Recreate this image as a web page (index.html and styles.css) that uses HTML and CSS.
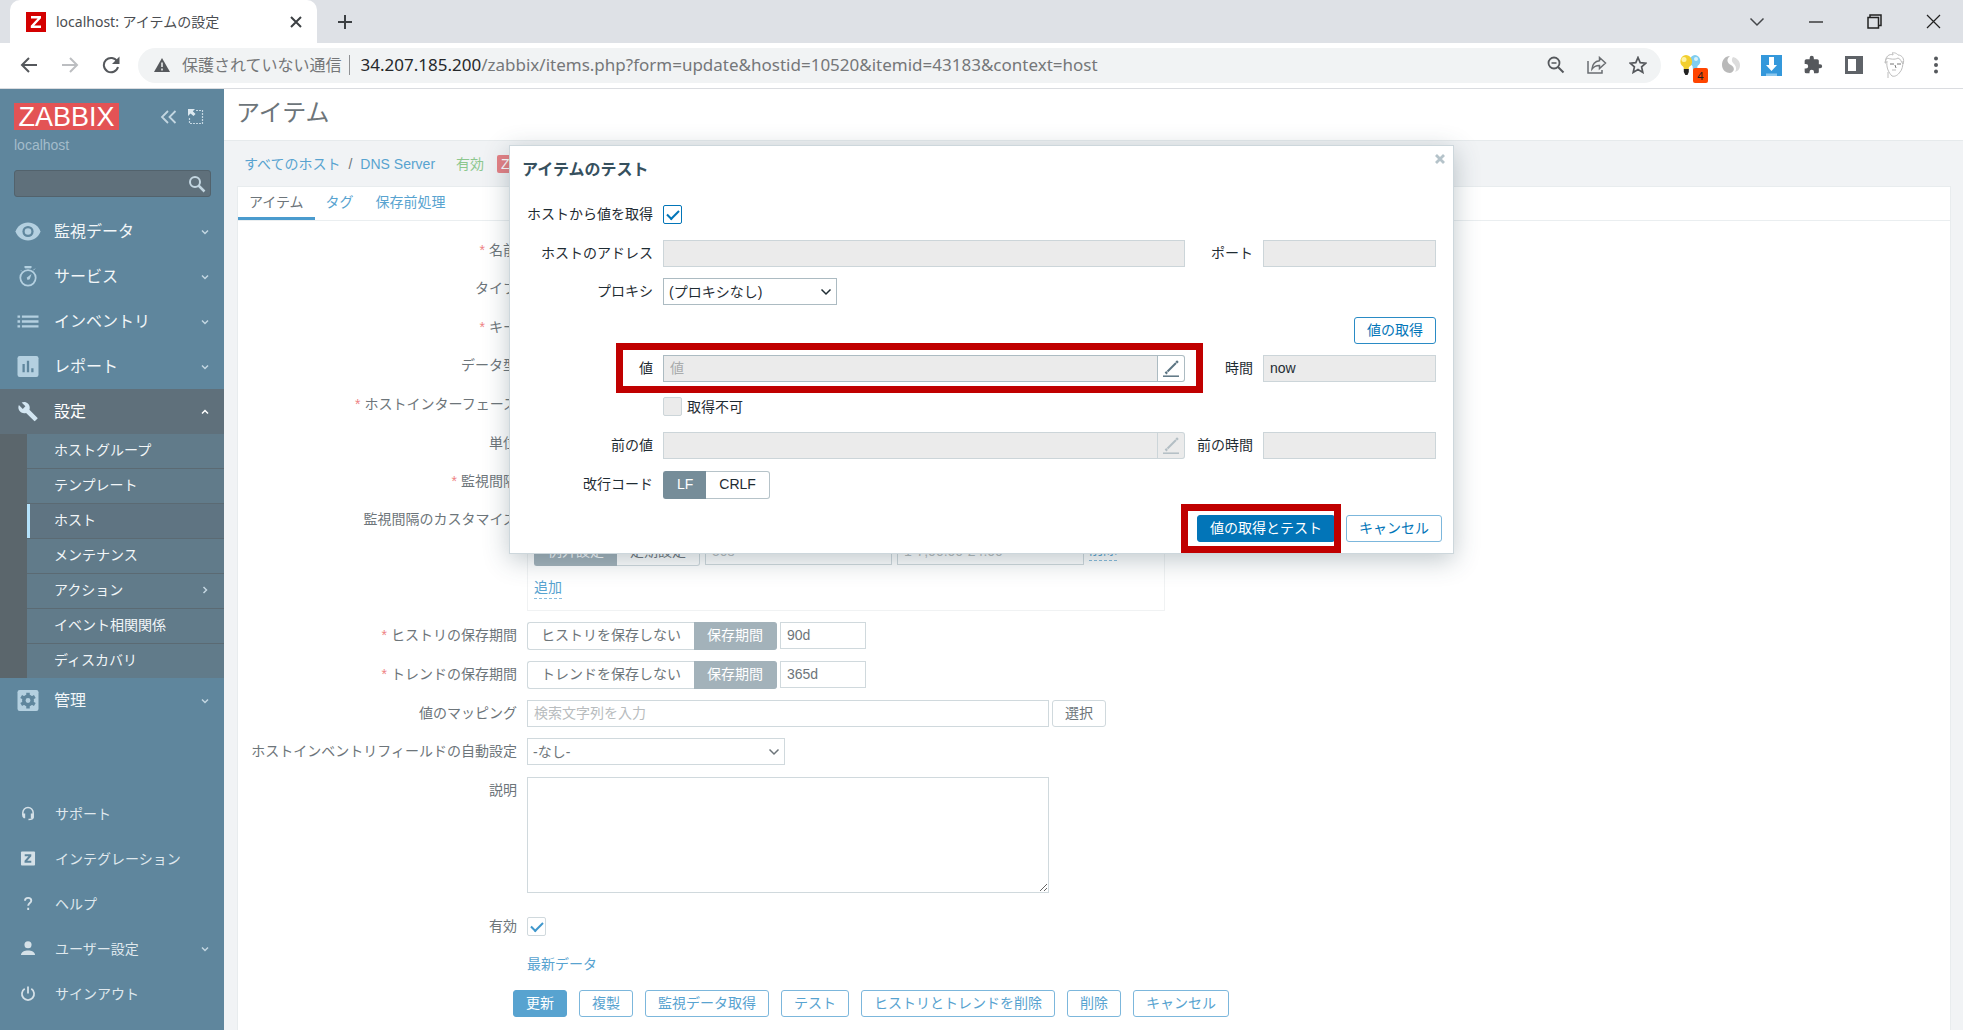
FILE: index.html
```html
<!DOCTYPE html>
<html lang="ja">
<head>
<meta charset="utf-8">
<title>localhost: アイテムの設定</title>
<link rel="stylesheet" href="styles.css">
</head>
<body>
<svg class="defs" aria-hidden="true">
  <symbol id="down" viewBox="0 0 8 8"><path d="M1 2.5l3 3 3-3" fill="none" stroke="currentColor" stroke-width="1.5"/></symbol>
  <symbol id="caret" viewBox="0 0 12 12"><path d="M1.5 3.5L6 8l4.500-4.500" fill="none" stroke="currentColor" stroke-width="1.500"/></symbol>
  <symbol id="pencil" viewBox="0 0 18 18"><path d="M5.500 11.500L14 3" stroke="currentColor" stroke-width="2"/><path d="M14.300 2.700l1.600-1.600M3.500 13.500l1.600-1.500" stroke="currentColor" stroke-width="2.400"/><path d="M1 16.200h16" stroke="currentColor" stroke-width="1.500"/></symbol>
</svg>

<header class="browser">
  <div class="tabstrip">
    <div class="tab">
      <svg class="favicon" width="20" height="20" viewBox="0 0 20 20"><rect width="20" height="20" fill="#d40000"/><path d="M5 4h10v2.200L8.200 13.600H15V16H4.800v-2.200L11.600 6.400H5z" fill="#fff"/></svg>
      <span class="tab-title">localhost: アイテムの設定</span>
      <button class="icon-btn tab-close" aria-label="タブを閉じる"><svg width="12" height="12" viewBox="0 0 12 12"><path d="M1 1l10 10M11 1L1 11" stroke="#3c4043" stroke-width="2"/></svg></button>
    </div>
    <button class="icon-btn tab-add" aria-label="新しいタブ"><svg width="16" height="16" viewBox="0 0 16 16"><path d="M8 1v14M1 8h14" stroke="#3c4043" stroke-width="2"/></svg></button>
    <div class="window-controls">
      <button class="icon-btn" aria-label="タブを検索"><svg width="16" height="10" viewBox="0 0 16 10"><path d="M1.500 1.500L8 8l6.500-6.500" fill="none" stroke="#44474a" stroke-width="1.500"/></svg></button>
      <button class="icon-btn" aria-label="最小化"><svg width="14" height="14" viewBox="0 0 14 14"><path d="M0 7h14" stroke="#222" stroke-width="1.300"/></svg></button>
      <button class="icon-btn" aria-label="元に戻す"><svg width="15" height="15" viewBox="0 0 15 15"><path d="M1 3.500h10.500V14H1zM3 3.500V1h11v10.500h-2.500" fill="none" stroke="#222" stroke-width="1.500"/></svg></button>
      <button class="icon-btn" aria-label="閉じる"><svg width="15" height="15" viewBox="0 0 15 15"><path d="M1 1l13 13M14 1L1 14" stroke="#222" stroke-width="1.200"/></svg></button>
    </div>
  </div>
  <div class="toolbar">
    <button class="icon-btn" aria-label="戻る"><svg width="18" height="18" viewBox="0 0 18 18"><path d="M17 9H2M9 2L2 9l7 7" fill="none" stroke="#55585c" stroke-width="2"/></svg></button>
    <button class="icon-btn" aria-label="進む"><svg width="18" height="18" viewBox="0 0 18 18"><path d="M1 9h15M9 2l7 7-7 7" fill="none" stroke="#bcbec1" stroke-width="2"/></svg></button>
    <button class="icon-btn" aria-label="再読み込み"><svg width="18" height="18" viewBox="0 0 18 18"><path d="M15.300 5.500A7.200 7.200 0 1 0 16 11" fill="none" stroke="#55585c" stroke-width="2"/><path d="M17.500.5v7.500H10z" fill="#55585c"/></svg></button>
    <div class="address">
      <svg width="16" height="14" viewBox="0 0 16 14"><path d="M8 0l8 14H0z" fill="#55585c"/><path d="M8 4.500v4.500M8 10.500v2" stroke="#f1f3f4" stroke-width="1.500"/></svg>
      <span class="insecure">保護されていない通信</span>
      <span class="divider"></span>
      <span class="url"><span class="host">34.207.185.200</span>/zabbix/items.php?form=update&amp;hostid=10520&amp;itemid=43183&amp;context=host</span>
      <button class="icon-btn" aria-label="ズーム"><svg width="18" height="18" viewBox="0 0 18 18"><circle cx="7" cy="7" r="5.500" fill="none" stroke="#55585c" stroke-width="1.800"/><path d="M11 11l5.500 5.500" stroke="#55585c" stroke-width="2"/><path d="M4.500 7h5" stroke="#55585c" stroke-width="1.500"/></svg></button>
      <button class="icon-btn" aria-label="共有"><svg width="20" height="18" viewBox="0 0 20 18"><path d="M1 5v12h14v-3" fill="none" stroke="#6a6d71" stroke-width="1.500"/><path d="M12.500 1.500L18.500 7l-6 5.500V9.500C9 9.300 7 10.500 5 13c.4-4.500 3-7.800 7.500-8.300z" fill="none" stroke="#6a6d71" stroke-width="1.500"/></svg></button>
      <button class="icon-btn" aria-label="ブックマーク"><svg width="18" height="18" viewBox="0 0 18 18"><path d="M9 1.500l2.200 5.200 5.600.5-4.200 3.700 1.200 5.500L9 13.500l-4.800 2.900 1.200-5.500L1.200 7.200l5.600-.5z" fill="none" stroke="#55585c" stroke-width="1.700"/></svg></button>
    </div>
    <button class="icon-btn ext" aria-label="拡張機能"><svg width="24" height="24" viewBox="0 0 24 24"><path d="M17 2a6 6 0 0 1 2.500 11l-.5 4h-4l-.5-4A6 6 0 0 1 17 2z" fill="#7fcdf0"/><circle cx="18" cy="6" r="2" fill="#d6f1fc"/><path d="M8 2a6.500 6.500 0 0 1 3 12l-.5 3H6l-.5-3A6.500 6.500 0 0 1 8 2z" fill="#f3cf2e"/><circle cx="6" cy="6.500" r="2.500" fill="#fdf3a4"/><path d="M5.800 16h5v3l-1.300 3H7.300l-1.500-3z" fill="#222"/></svg><span class="badge">4</span></button>
    <button class="icon-btn" aria-label="拡張機能"><svg width="20" height="20" viewBox="0 0 20 20"><path d="M9 1C4 1 1 5 1 10c0 5 4 8 8 8 5-1 5-6 1-8S5 4 9 1z" fill="#b9b9b9"/><path d="M12 2c4 1 7 4 7 8s-2 6-5 7c2-3 1-6-1-8s-3-4-1-7z" fill="#dcdcdc"/></svg></button>
    <button class="icon-btn" aria-label="ダウンロード"><svg width="21" height="21" viewBox="0 0 21 21"><rect width="21" height="21" fill="#3498db"/><path d="M8 2h5v8h3l-5.500 6L5 10h3z" fill="#fff"/><path d="M5 18.500h11V21H5z" fill="#8cc8ee"/></svg></button>
    <button class="icon-btn" aria-label="拡張機能"><svg width="20" height="20" viewBox="0 0 24 24"><path fill="#55585c" d="M20.500 11H19V7a2 2 0 0 0-2-2h-4V3.500a2.500 2.500 0 0 0-5 0V5H4a2 2 0 0 0-2 2v3.800h1.500a2.700 2.700 0 0 1 0 5.400H2V20a2 2 0 0 0 2 2h3.800v-1.500a2.700 2.700 0 0 1 5.400 0V22H17a2 2 0 0 0 2-2v-4h1.500a2.500 2.500 0 0 0 0-5z"/></svg></button>
    <button class="icon-btn" aria-label="サイドパネル"><svg width="18" height="18" viewBox="0 0 18 18"><path d="M0 0h18v18H0zM3 3v12h8V3z" fill="#5f6368" fill-rule="evenodd"/></svg></button>
    <button class="icon-btn" aria-label="プロフィール"><svg width="22" height="26" viewBox="0 0 22 26" fill="none" stroke="#bdbdbd"><path d="M3 9c-1 7 2 12 5 15 3 1 6-1 8-4 2-2 3-6 3-11"/><path d="M2 11C0 5 6 1 9 3c0-2-1-2-1-2 4-1 6 2 6 2 4 0 7 4 5 9-2-2-2-5-5-6-3 2-8 1-11 0-1 2-2 3-2 5zM4 20v6M8 18h4"/><path d="M6 12h4M13 12h4M11 13l1 3" stroke="#777"/></svg></button>
    <button class="icon-btn" aria-label="メニュー"><svg width="4" height="18" viewBox="0 0 4 18" fill="#55585c"><circle cx="2" cy="2.500" r="2"/><circle cx="2" cy="9" r="2"/><circle cx="2" cy="15.500" r="2"/></svg></button>
  </div>
</header>

<div class="app">
  <aside class="sidebar">
    <div class="brand">
      <a class="logo" href="#">ZABBIX</a>
      <button class="icon-btn collapse" aria-label="サイドバーを隠す"><svg width="17" height="14" viewBox="0 0 17 14"><path d="M8 1L2 7l6 6M15.500 1l-6 6 6 6" fill="none" stroke="#c3d6e1" stroke-width="1.800"/></svg></button>
      <button class="icon-btn kiosk" aria-label="コンパクト表示"><svg width="16" height="16" viewBox="0 0 16 16"><path d="M8 1.500h6.500v13h-13V8" fill="none" stroke="#c3d6e1" stroke-width="1.200" stroke-dasharray="2 1"/><path d="M0 0h7L4.800 2.200 7.500 5 5.500 7 2.500 4.500 0 7z" fill="#dce8ef"/></svg></button>
    </div>
    <div class="server">localhost</div>
    <div class="search">
      <input type="text" aria-label="検索">
      <svg width="18" height="18" viewBox="0 0 18 18"><circle cx="7" cy="7" r="5" fill="none" stroke="#c3d6e1" stroke-width="2"/><path d="M10.500 10.500l6 6" stroke="#c3d6e1" stroke-width="2.500"/></svg>
    </div>
    <nav class="menu">
      <a class="item" href="#"><svg class="ico" viewBox="0 0 26 18"><path d="M13 0C7 0 2.500 3.600.5 9c2 5.400 6.500 9 12.500 9s10.500-3.600 12.500-9C23.500 3.600 19 0 13 0z" fill="#b4d0e0"/><circle cx="13" cy="9" r="5.600" fill="#5f869d"/><circle cx="13" cy="9" r="3.300" fill="#b4d0e0"/></svg><span>監視データ</span><svg class="arrow"><use href="#down"/></svg></a>
      <a class="item" href="#"><svg class="ico" viewBox="0 0 24 24"><circle cx="12" cy="13.500" r="8.800" fill="none" stroke="#b4d0e0" stroke-width="2"/><path d="M8.500 0h7v2.200h-7zM18 5l2-2M5 6L4 5" stroke="#b4d0e0" fill="#b4d0e0"/><path d="M16 9l-2 6-2.500 1-1-2.500z" fill="#b4d0e0"/></svg><span>サービス</span><svg class="arrow"><use href="#down"/></svg></a>
      <a class="item" href="#"><svg class="ico" viewBox="0 0 24 24"><path d="M0 6.500h3M5 6.500h19M0 12h3M5 12h19M0 17.500h3M5 17.500h19" stroke="#b4d0e0" stroke-width="2.600"/></svg><span>インベントリ</span><svg class="arrow"><use href="#down"/></svg></a>
      <a class="item" href="#"><svg class="ico" viewBox="0 0 24 24"><rect width="24" height="24" rx="2.500" fill="#b4d0e0"/><path d="M7 9v9.500M12 5.500v13M17 14v4.500" stroke="#5f869d" stroke-width="2.600"/></svg><span>レポート</span><svg class="arrow"><use href="#down"/></svg></a>
      <a class="item open" href="#"><svg class="ico" viewBox="0 0 24 24"><path fill="#d3e6f2" d="M22.700 19l-9.100-9.100c.9-2.300.4-5-1.500-6.900-2-2-5-2.400-7.400-1.300L9 6 6 9 1.600 4.700C.4 7.100.9 10.100 2.900 12.100c1.900 1.900 4.600 2.400 6.900 1.500l9.100 9.100c.4.4 1 .4 1.400 0l2.300-2.300c.5-.4.5-1.100.1-1.400z"/></svg><span>設定</span><svg class="arrow up"><use href="#down"/></svg></a>
      <div class="submenu">
        <a href="#">ホストグループ</a>
        <a href="#">テンプレート</a>
        <a href="#" class="current">ホスト</a>
        <a href="#">メンテナンス</a>
        <a href="#">アクション<svg class="arrow right"><use href="#down"/></svg></a>
        <a href="#">イベント相関関係</a>
        <a href="#">ディスカバリ</a>
      </div>
      <a class="item" href="#"><svg class="ico" viewBox="0 0 24 24"><rect width="24" height="24" rx="2.500" fill="#b4d0e0"/><circle cx="12" cy="12" r="4.800" fill="none" stroke="#5f869d" stroke-width="4"/><path d="M12 3v4M12 17v4M4.200 7.500l3.500 2M16.300 14.500l3.500 2M4.200 16.500l3.500-2M16.300 9.500l3.500-2" stroke="#5f869d" stroke-width="4"/></svg><span>管理</span><svg class="arrow"><use href="#down"/></svg></a>
    </nav>
    <nav class="menu small">
      <a class="item" href="#"><svg class="ico" viewBox="0 0 16 16"><path d="M2.500 10V7a5.500 5.500 0 0 1 11 0v4.500c0 2-2 3-5 3" fill="none" stroke="#d5e1e8" stroke-width="1.600"/><path d="M2 8h3v5H3.500L2 11.500zM11 8h3v5h-3z" fill="#d5e1e8"/></svg><span>サポート</span></a>
      <a class="item" href="#"><svg class="ico" viewBox="0 0 16 16"><rect x=".5" y=".5" width="15" height="15" rx="1" fill="#d5e1e8"/><path d="M4.500 3.500h7v2l-4.300 5h4.300v2h-7.200v-2l4.300-5H4.500z" fill="#5f869d"/></svg><span>インテグレーション</span></a>
      <a class="item" href="#"><svg class="ico" viewBox="0 0 16 16"><path d="M4.800 5C4.800 1 11.500 1 11.500 5c0 2.600-3.300 2.500-3.300 5.500M8.200 12.500v2.500" fill="none" stroke="#d5e1e8" stroke-width="2"/></svg><span>ヘルプ</span></a>
      <a class="item" href="#"><svg class="ico" viewBox="0 0 16 16"><circle cx="8" cy="4" r="3.800" fill="#d5e1e8"/><path d="M.5 15c0-3.500 4-5 7.500-5s7.500 1.500 7.500 5z" fill="#d5e1e8"/></svg><span>ユーザー設定</span><svg class="arrow"><use href="#down"/></svg></a>
      <a class="item" href="#"><svg class="ico" viewBox="0 0 16 16"><path d="M4.500 3a6.500 6.500 0 1 0 7 0M8 .5v7.500" fill="none" stroke="#d5e1e8" stroke-width="1.900"/></svg><span>サインアウト</span></a>
    </nav>
  </aside>

  <main class="page">
    <div class="page-head"><h1>アイテム</h1></div>
    <div class="crumbs">
      <a href="#">すべてのホスト</a><span class="slash">/</span><a href="#">DNS Server</a><span class="enabled">有効</span><span class="zbx">ZBX</span>
    </div>
    <section class="panel">
      <div class="tabs">
        <a class="active" href="#">アイテム</a><a href="#">タグ</a><a href="#">保存前処理</a>
      </div>
      <form class="form">
        <label class="req" for="name">名前</label><div class="row"><input class="wide" id="name" type="text"></div>
        <label for="type">タイプ</label><div class="row tall"><span class="select"><select id="type"></select></span></div>
        <label class="req" for="key">キー</label><div class="row"><input class="wide" id="key" type="text"></div>
        <label for="vtype">データ型</label><div class="row tall"><span class="select"><select id="vtype"></select></span></div>
        <label class="req" for="iface">ホストインターフェース</label><div class="row tall"><span class="select"><select id="iface"></select></span></div>
        <label for="units">単位</label><div class="row"><input class="wide" id="units" type="text"></div>
        <label class="req" for="delay">監視間隔</label><div class="row"><input class="wide" id="delay" type="text"></div>
        <label for="flex">監視間隔のカスタマイズ</label>
        <div class="intervals">
          <div class="row tall">
            <div class="seg"><button type="button" class="on">例外設定</button><button type="button">定期設定</button></div>
            <input id="flex" type="text" placeholder="50s"><input type="text" placeholder="1-7,00:00-24:00" aria-label="期間"><a class="dotted" href="#">削除</a>
          </div>
          <div class="add-row"><a class="dotted" href="#">追加</a></div>
        </div>
        <label class="req" for="history">ヒストリの保存期間</label>
        <div class="row tall"><div class="seg"><button type="button">ヒストリを保存しない</button><button type="button" class="on">保存期間</button></div><input class="short" id="history" type="text" value="90d"></div>
        <label class="req" for="trends">トレンドの保存期間</label>
        <div class="row tall"><div class="seg"><button type="button">トレンドを保存しない</button><button type="button" class="on">保存期間</button></div><input class="short" id="trends" type="text" value="365d"></div>
        <label for="map">値のマッピング</label>
        <div class="row"><input class="wide" id="map" type="text" placeholder="検索文字列を入力"><button type="button" class="btn plain">選択</button></div>
        <label for="inv">ホストインベントリフィールドの自動設定</label>
        <div class="row tall"><span class="select mid"><select id="inv"><option>-なし-</option></select><svg><use href="#caret"/></svg></span></div>
        <label for="desc">説明</label><div><textarea id="desc"></textarea></div>
        <label class="enable" for="status">有効</label><div class="row enable"><input id="status" type="checkbox" checked></div>
        <div class="row tall latest"><a href="#">最新データ</a></div>
        <div class="actions">
          <button type="button" class="btn primary">更新</button><button type="button" class="btn">複製</button><button type="button" class="btn">監視データ取得</button><button type="button" class="btn">テスト</button><button type="button" class="btn">ヒストリとトレンドを削除</button><button type="button" class="btn">削除</button><button type="button" class="btn">キャンセル</button>
        </div>
      </form>
    </section>
  </main>
</div>

<div class="overlay">
  <section class="dialog" role="dialog" aria-labelledby="dlg-title">
    <div class="dialog-head">
      <h2 id="dlg-title">アイテムのテスト</h2>
      <button class="icon-btn close" aria-label="閉じる"><svg width="10" height="10" viewBox="0 0 10 10"><path d="M1 1l8 8M9 1L1 9" stroke="#b5c3ca" stroke-width="2.800"/></svg></button>
    </div>
    <form class="test-form">
      <label for="get">ホストから値を取得</label><div class="span"><input id="get" type="checkbox" checked></div>
      <label for="addr">ホストのアドレス</label><input id="addr" type="text" disabled><label for="port">ポート</label><input id="port" type="text" disabled>
      <label for="proxy">プロキシ</label><div class="span"><span class="select small-select"><select id="proxy"><option>(プロキシなし)</option></select><svg><use href="#caret"/></svg></span></div>
      <div class="fetch"><button type="button" class="btn">値の取得</button></div>
      <label for="val">値</label><div class="multi active"><input id="val" type="text" placeholder="値" disabled><button type="button" aria-label="値を編集"><svg width="18" height="18"><use href="#pencil"/></svg></button></div><label for="time">時間</label><input id="time" type="text" value="now" disabled>
      <div class="unsupported"><input id="unsup" type="checkbox" disabled><label for="unsup">取得不可</label></div>
      <label for="prev">前の値</label><div class="multi"><input id="prev" type="text" disabled><button type="button" disabled aria-label="前の値を編集"><svg width="18" height="18"><use href="#pencil"/></svg></button></div><label for="ptime">前の時間</label><input id="ptime" type="text" disabled>
      <label for="lf">改行コード</label><div class="span seg"><button type="button" class="on" id="lf">LF</button><button type="button">CRLF</button></div>
    </form>
    <div class="dialog-foot">
      <button type="button" class="btn primary">値の取得とテスト</button>
      <button type="button" class="btn">キャンセル</button>
    </div>
    <div class="mark mark-value"></div>
    <div class="mark mark-submit"></div>
  </section>
</div>
</body>
</html>
```
FILE: styles.css
```css
* { box-sizing: border-box; }
body {
  margin: 0;
  height: 100vh;
  display: flex;
  flex-direction: column;
  overflow: hidden;
  font: 14px/20px "Liberation Sans", "Noto Sans CJK JP", sans-serif;
  color: #6d757a;
  --line: #d0d9dd;
  --seg: #a3b2ba;
  --blue: #58a3d0;
}
a { color: var(--blue); text-decoration: none; }
button, input, select, textarea { font: inherit; color: inherit; margin: 0; }
h1, h2 { margin: 0; }
.defs { display: none; }
.icon-btn {
  border: 0; padding: 0; background: none;
  display: flex; align-items: center; justify-content: center;
  flex: none;
}

/* Browser frame */
.browser { flex: none; font-family: "Noto Sans", "Noto Sans CJK JP", sans-serif; }
.tabstrip { display: flex; height: 43px; background: #dee1e6; padding-left: 10px; }
.tab {
  width: 307px; display: flex; align-items: center;
  background: #fff; border-radius: 10px 10px 0 0; padding: 0 15px 0 16px;
}
.tab-title { flex: 1; margin-left: 10px; color: #4a4d51; font-size: 14px; }
.tab-add { width: 56px; }
.window-controls { margin-left: auto; display: flex; }
.window-controls .icon-btn { width: 59px; }
.toolbar {
  display: flex; align-items: center; height: 46px; padding: 0 7px 1px 8px;
  background: #fff; border-bottom: 1px solid #dadce0;
}
.toolbar .icon-btn { width: 41px; height: 35px; }
.address {
  flex: 1; display: flex; align-items: center; height: 35px;
  margin: 0 8px 0 7px; padding: 0 3px 0 16px;
  border-radius: 18px; background: #f1f3f4; font-size: 16px; color: #757779;
}
.insecure { margin-left: 12px; }
.divider { width: 1px; height: 20px; margin: 0 11px 0 7px; background: #8f9194; }
.url { flex: 1; white-space: nowrap; font-size: 17px; }
.host { color: #26282b; }
.ext { position: relative; }
.badge {
  position: absolute; right: 2px; bottom: 0; width: 15px; height: 15px;
  background: #ff4500; border-radius: 2px; color: #222; font-size: 11px; line-height: 15px;
}

/* Sidebar */
.app { flex: 1; display: flex; min-height: 0; }
.sidebar {
  width: 224px; flex: none; display: flex; flex-direction: column;
  background: #5f869d; padding: 14px 0;
}
.brand { display: flex; align-items: center; padding: 0 20px 0 14px; }
.logo { width: 105px; height: 27px; background: #e35355; color: #fff; font-size: 27px; line-height: 28px; text-align: center; }
.collapse { margin-left: auto; }
.kiosk { margin-left: 11px; }
.server { margin: 5px 14px 15px; color: #a3bccb; }
.search { position: relative; margin: 0 13px 12px 14px; }
.search input[type="text"] {
  display: block; width: 100%; padding: 0 30px 0 6px;
  background: #5f707b; border: 1px solid #52626c; border-radius: 3px; color: #fff;
}
.search svg { position: absolute; right: 5px; top: 5px; }
.item {
  display: flex; align-items: center; height: 45px; padding: 0 15px 0 15px;
  font-size: 16px; color: #f2f6f8;
}
.item .ico { width: 26px; height: 21px; flex: none; margin-right: 13px; }
.item span { flex: 1; }
.arrow { width: 8px; height: 8px; color: #c3d6e1; flex: none; }
.arrow.up { transform: rotate(180deg); color: #fff; }
.arrow.right { transform: rotate(-90deg); }
.open { background: #5f707b; color: #fff; }
.submenu { border-left: 27px solid #5b666c; background: #5b6a73; }
.submenu a {
  display: flex; align-items: center; justify-content: space-between; height: 34px;
  padding: 0 15px 2px 27px; margin-bottom: 1px; background: #617b8a; color: #f2f6f8;
}
.submenu a:last-child { margin: 0; }
.submenu .current { background: #5f7482; border-left: 3px solid #b4e2fb; padding-left: 24px; }
.small { margin-top: auto; }
.small .item { font-size: 14px; color: #dfe8ed; }
.small .ico { height: 15px; margin-right: 14px; }

/* Page */
.page { flex: 1; min-width: 0; background: #f1f3f5; display: flex; flex-direction: column; overflow: hidden; }
.page-head { height: 52px; flex: none; padding: 6px 12px; background: #fff; border-bottom: 1px solid #e6eaec; }
h1 { font-size: 24px; line-height: 36px; font-weight: 400; }
.crumbs { display: flex; align-items: center; height: 45px; flex: none; padding-left: 20px; }
.slash { margin: 0 8px; }
.enabled { margin-left: 21px; color: #8cc78e; }
.zbx { margin-left: 13px; padding: 0 4px; height: 18px; line-height: 18px; border-radius: 2px; background: #e58185; color: #fff; }
.panel { flex: 1 0 auto; margin: 0 12px 0 13px; background: #fff; border: 1px solid #e8ecee; border-bottom: 0; }
.tabs { display: flex; height: 34px; border-bottom: 1px solid #eaeef0; }
.tabs a { padding: 5px 11px 0; }
.tabs .active { color: #6d757a; border-bottom: 3px solid #4a9bce; }
.form {
  display: grid; grid-template-columns: 279px 1fr; column-gap: 10px; row-gap: 11px;
  padding: 16px 0 14px; line-height: 27px;
}
.form > label { text-align: right; white-space: nowrap; }
.req::before { content: "*"; color: #ee8384; margin-right: 4px; }
.row { display: flex; align-items: flex-start; height: 27px; gap: 3px; }
.tall { height: 28px; }
input[type="text"], select, textarea {
  height: 27px; padding: 0 6px; border: 1px solid var(--line); border-radius: 0; background: #fff; outline: 0;
}
::placeholder { color: #b8bcbe; opacity: 1; }
.wide { width: 522px; }
.short { width: 86px; }
.select { position: relative; display: inline-flex; width: 174px; height: 27px; }
.select select { appearance: none; width: 100%; padding: 0 5px; }
.select svg { position: absolute; right: 5px; top: 8px; width: 12px; height: 12px; }
.mid { width: 258px; }
textarea { display: block; width: 522px; height: 116px; }
.intervals { width: 638px; padding: 31px 6px 9px; border: 1px solid #f0f2f3; }
.intervals input { width: 187px; }
.intervals .row { gap: 5px; }
.dotted { line-height: 22px; border-bottom: 1px dashed #8abede; }
.add-row { margin: 8px 0 0; height: 27px; }
.add-row .dotted { display: inline-block; }
.seg { display: flex; height: 28px; }
.seg button { height: 28px; padding: 0 13px 2px; border: 1px solid var(--line); background: #fff; line-height: 20px; }
.seg button:first-child { border-radius: 3px 0 0 3px; border-right: 0; }
.seg button:last-child { border-radius: 0 3px 3px 0; border-left: 0; }
.seg .on { background: var(--seg); border-color: var(--seg); color: #fff; }
.btn {
  height: 27px; padding: 0 12px 2px; border: 1px solid #7cb7dc; border-radius: 3px;
  background: #fff; color: var(--blue); line-height: 20px;
}
.primary { background: var(--blue); border-color: var(--blue); color: #fff; }
.plain { border-color: var(--line); color: inherit; }
input[type="checkbox"] {
  appearance: none; width: 19px; height: 19px; border: 1px solid var(--line); border-radius: 2px;
  background: #fff; display: grid; place-items: center; flex: none;
}
input[type="checkbox"]:checked::after {
  content: ""; width: 10px; height: 5px; margin-bottom: 3px;
  border: solid #3f97cc; border-width: 0 0 2px 2px; transform: rotate(-45deg);
}
.enable { margin-top: 9px; }
.row.enable { align-items: center; }
.latest { grid-column: 2; }
.actions { grid-column: 1 / -1; display: flex; gap: 12px; padding-left: 275px; }

/* Test dialog */
.overlay {
  position: absolute; top: 0; left: 0; right: 0;
  display: flex; justify-content: center; padding-top: 145px;
  color: #1f2c33; --line: #ccd5d9; --seg: #768d99; --blue: #0275b8;
}
.dialog {
  position: relative; width: 945px; background: #fff; border: 1px solid #cdd7dc;
  box-shadow: 0 6px 24px rgba(45, 72, 86, 0.3); padding-bottom: 11px;
}
.dialog-head { display: flex; justify-content: space-between; align-items: flex-start; height: 55px; padding: 8px 8px 0 12px; }
h2 { font-size: 16px; line-height: 31px; font-weight: 700; color: #36505e; }
.test-form {
  display: grid; grid-template-columns: 1fr 522px 58px 173px; column-gap: 10px; row-gap: 11px;
  grid-template-rows: 28px 27px 28px 27px 28px 27px 28px 28px; padding: 0 17px 0 16px; line-height: 27px;
}
.test-form > label { text-align: right; white-space: nowrap; }
.test-form .span { grid-column: 2 / -1; }
.test-form input[type="checkbox"] { margin-top: 4px; border-color: #0275b8; }
.test-form input[type="checkbox"]:checked::after { border-color: #0275b8; }
.test-form input:disabled { background: #ebebeb; border-color: var(--line); }
.test-form ::placeholder { color: #a9acad; }
.test-form select { border-color: #acbbc2; }
.fetch { grid-column: 1 / -1; text-align: right; }
.fetch .btn { display: inline-block; vertical-align: top; border-color: #2a8bc5; }
.multi { display: flex; height: 27px; }
.multi input { flex: 1; min-width: 0; }
.multi button {
  width: 27px; padding: 0; border: 1px solid var(--line); border-left: 0; border-radius: 0 3px 3px 0;
  display: flex; align-items: center; justify-content: center; background: #ebebeb; color: #b3bec4;
}
.test-form .active input, .test-form .active button { border-color: #acbbc2; }
.active button { background: #fff; color: #5b7482; }
.unsupported { grid-column: 2 / -1; display: flex; gap: 5px; }
.test-form .unsupported input { border-color: var(--line); margin-top: 3px; }
.test-form .seg button { border-color: #b6c3c9; }
.test-form .seg .on { border-color: var(--seg); }
.dialog-foot { display: flex; justify-content: flex-end; gap: 11px; padding: 16px 11px 0 0; }
.mark { position: absolute; border: 7px solid #c00000; pointer-events: none; }
.mark-value { left: 106px; top: 197px; width: 587px; height: 50px; }
.mark-submit { left: 671px; top: 358px; width: 160px; height: 49px; }
```
